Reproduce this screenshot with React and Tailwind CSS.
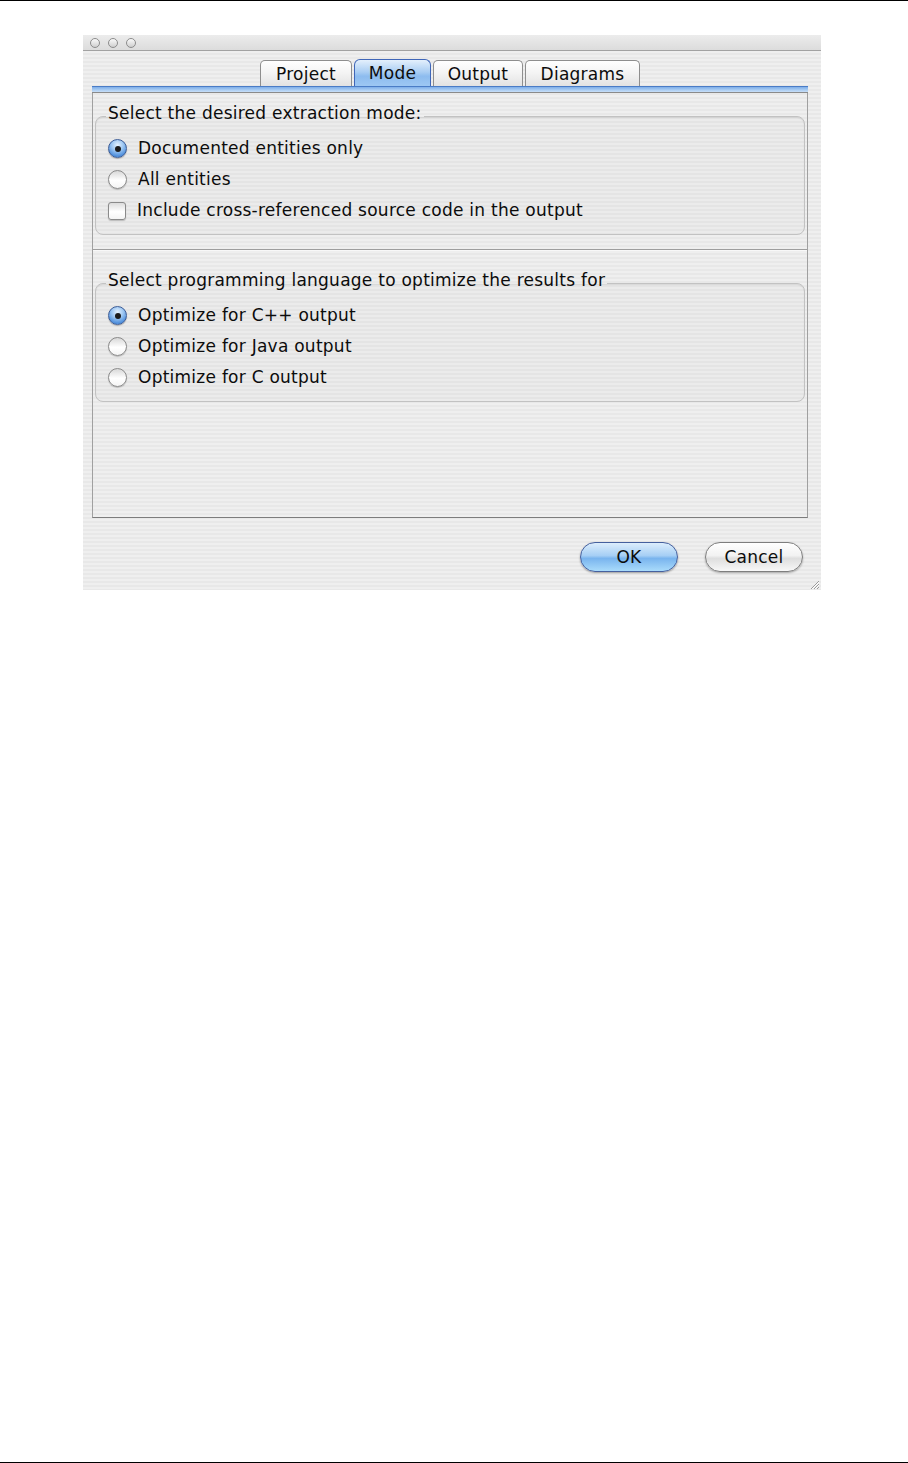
const stripes =
  "bg-[repeating-linear-gradient(to_bottom,#efefef_0px,#efefef_2px,#e8e8e8_2px,#e8e8e8_4px)]";

function Light() {
  return (
    <span className="w-[10px] h-[10px] rounded-full border border-[#8c8c8c] bg-[linear-gradient(to_bottom,#fafafa,#cfcfcf)]" />
  );
}

function Tab({ label, width, active }) {
  if (active) {
    return (
      <div
        className={`${width} h-[28px] -mb-[1px] flex items-center justify-center rounded-t-[6px] border border-b-0 border-[#3f66b8] bg-[linear-gradient(to_bottom,#e4f0fc,#a9cdf3_45%,#8dbcef_60%,#9fc8f3)] pt-[1px]`}
      >
        {label}
      </div>
    );
  }
  return (
    <div
      className={`${width} h-[26px] flex items-center justify-center rounded-t-[5px] border border-b-0 border-[#8e8e8e] bg-[linear-gradient(to_bottom,#ffffff,#f3f3f3_50%,#e2e2e2)] pt-[2px]`}
    >
      {label}
    </div>
  );
}

function Radio({ checked }) {
  if (checked) {
    return (
      <span className="w-[19px] h-[19px] shrink-0 rounded-full border border-[#3c5d98] bg-[radial-gradient(circle_at_50%_30%,#e6f2fe_0%,#9cc6f2_40%,#4f8fdc_75%,#6aa6e8_100%)] shadow-[0_1px_1px_rgba(0,0,0,0.25)] flex items-center justify-center">
        <span className="w-[6px] h-[6px] rounded-full bg-[#1b1b1b]" />
      </span>
    );
  }
  return (
    <span className="w-[19px] h-[19px] shrink-0 rounded-full border border-[#8a8a8a] bg-[linear-gradient(to_bottom,#d8d8d8,#ffffff_55%,#f4f4f4)] shadow-[0_1px_1px_rgba(0,0,0,0.2)]" />
  );
}

function Check() {
  return (
    <span className="w-[18px] h-[18px] shrink-0 rounded-[3px] border border-[#8a8a8a] bg-[linear-gradient(to_bottom,#dcdcdc,#ffffff_55%,#f4f4f4)] shadow-[0_1px_1px_rgba(0,0,0,0.2)]" />
  );
}

function Row({ control, label }) {
  return (
    <div className="h-[31px] flex items-center gap-[11px]">
      {control}
      <span>{label}</span>
    </div>
  );
}

function Group({ title, className, children }) {
  return (
    <fieldset
      className={`mx-[2px] min-w-0 rounded-[8px] border border-[#c2c2c2] shadow-[inset_0_1px_1px_rgba(0,0,0,0.08)] bg-black/[0.015] pl-[12px] pb-[8px] pt-[2px] ${className}`}
    >
      <legend className="leading-[19px] pt-[3px] pb-[8px] -ml-[2px] px-[2px]">{title}</legend>
      {children}
    </fieldset>
  );
}

export default function App() {
  return (
    <div className="w-[908px] h-[1463px] bg-white border-t border-b border-black font-['DejaVu_Sans',Verdana,sans-serif] text-[17px] tracking-[0.25px] text-[#0c0c0c]">
      <div className="pt-[34px] pl-[83px]">
        <div className={`w-[738px] h-[555px] ${stripes} flex flex-col`}>
          {/* title bar */}
          <div className="h-[16px] shrink-0 flex items-center gap-[8px] pl-[7px] border-b border-[#a2a2a2] bg-[linear-gradient(to_bottom,#ececec,#dcdcdc)]">
            <Light />
            <Light />
            <Light />
          </div>

          {/* tabs */}
          <div className="h-[35px] shrink-0 flex items-end gap-[2px] pl-[177px]">
            <Tab label="Project" width="w-[92px]" />
            <Tab label="Mode" width="w-[77px]" active />
            <Tab label="Output" width="w-[90px]" />
            <Tab label="Diagrams" width="w-[115px]" />
          </div>

          {/* blue strip */}
          <div className="ml-[9px] w-[716px] h-[7px] shrink-0 border-t border-[#4a7cc6] border-b border-b-[#8a8a8a] bg-[linear-gradient(to_bottom,#7eaee8,#a3c8f1_50%,#c9dff7)]" />

          {/* panel */}
          <div className="ml-[9px] w-[716px] h-[425px] shrink-0 border-x border-[#a0a0a0] border-b border-b-[#7c7c7c] flex flex-col">
            <Group title="Select the desired extraction mode:" className="mt-[8px]">
              <Row control={<Radio checked />} label="Documented entities only" />
              <Row control={<Radio />} label="All entities" />
              <Row control={<Check />} label="Include cross-referenced source code in the output" />
            </Group>

            <div className="mt-[14px] h-px bg-[#9e9e9e] shadow-[0_1px_0_#f8f8f8]" />

            <Group title="Select programming language to optimize the results for" className="mt-[18px]">
              <Row control={<Radio checked />} label="Optimize for C++ output" />
              <Row control={<Radio />} label="Optimize for Java output" />
              <Row control={<Radio />} label="Optimize for C output" />
            </Group>
          </div>

          {/* buttons */}
          <div className="mt-[24px] h-[30px] shrink-0 flex justify-end gap-[27px] pr-[18px]">
            <button className="w-[98px] h-[30px] rounded-full border border-[#45609e] bg-[linear-gradient(to_bottom,#dcedfc,#a6cff5_45%,#79b4ee_55%,#a9dbfb)] shadow-[0_1px_2px_rgba(0,0,0,0.35)] pt-[2px]">
              OK
            </button>
            <button className="w-[98px] h-[30px] rounded-full border border-[#7e7e7e] bg-[linear-gradient(to_bottom,#ffffff,#f2f2f2_45%,#dedede_55%,#f8f8f8)] shadow-[0_1px_2px_rgba(0,0,0,0.3)] pt-[2px]">
              Cancel
            </button>
          </div>

          {/* resize grip */}
          <div className="mt-[6px] flex justify-end pr-[1px]">
            <svg width="12" height="12" viewBox="0 0 12 12">
              <path d="M11 3 L3 11 M11 6 L6 11 M11 9 L9 11" stroke="#9a9a9a" strokeWidth="1" />
              <path d="M11 4 L4 11 M11 7 L7 11" stroke="#ffffff" strokeWidth="1" />
            </svg>
          </div>
        </div>
      </div>
    </div>
  );
}
